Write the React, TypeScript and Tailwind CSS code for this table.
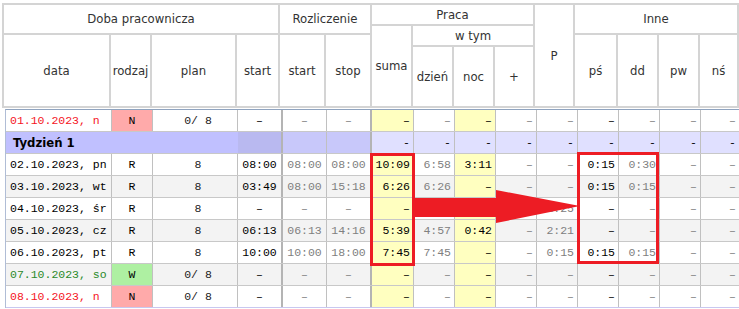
const D = "–";

type Row = {
  date: string;
  dateColor: string;
  kind: string;
  kindBg: string;
  plan: string;
  v: string[];
  alt?: boolean;
};

const rows: Row[] = [
  { date: "01.10.2023, n", dateColor: "text-[#f5141e]", kind: "N", kindBg: "bg-[#ffaaaa]", plan: "0/ 8", v: [D, D, D, D, D, D, D, D, D, D, D, D] },
  { date: "02.10.2023, pn", dateColor: "text-black", kind: "R", kindBg: "", plan: "8", v: ["08:00", "08:00", "08:00", "10:09", "6:58", "3:11", D, D, "0:15", "0:30", D, D] },
  { date: "03.10.2023, wt", dateColor: "text-black", kind: "R", kindBg: "", plan: "8", v: ["03:49", "08:00", "15:18", "6:26", "6:26", D, D, D, "0:15", "0:15", D, D], alt: true },
  { date: "04.10.2023, śr", dateColor: "text-black", kind: "R", kindBg: "", plan: "8", v: [D, D, D, D, D, D, D, "1:25", D, D, D, D] },
  { date: "05.10.2023, cz", dateColor: "text-black", kind: "R", kindBg: "", plan: "8", v: ["06:13", "06:13", "14:16", "5:39", "4:57", "0:42", D, "2:21", D, D, D, D], alt: true },
  { date: "06.10.2023, pt", dateColor: "text-black", kind: "R", kindBg: "", plan: "8", v: ["10:00", "10:00", "18:00", "7:45", "7:45", D, D, "0:15", "0:15", "0:15", D, D] },
  { date: "07.10.2023, so", dateColor: "text-[#2a8a2a]", kind: "W", kindBg: "bg-[#aef0a2]", plan: "0/ 8", v: [D, D, D, D, D, D, D, D, D, D, D, D], alt: true },
  { date: "08.10.2023, n", dateColor: "text-[#f5141e]", kind: "N", kindBg: "bg-[#ffaaaa]", plan: "0/ 8", v: [D, D, D, D, D, D, D, D, D, D, D, D] },
];

// start, start, stop, suma, dzień, noc, +, P, pś, dd, pw, nś
const valueCols = [
  "justify-center text-black border-r-2 border-[#b4b4b4]",
  "justify-center text-[#808080] border-r border-[#c0c0c0]",
  "justify-center text-[#808080] border-r-2 border-[#b4b4b4]",
  "justify-end pr-[3px] text-black border-r border-[#c0c0c0] bg-[#ffffc0]",
  "justify-end pr-[3px] text-[#808080] border-r border-[#c0c0c0]",
  "justify-end pr-[3px] text-black border-r border-[#c0c0c0] bg-[#ffffc0]",
  "justify-end pr-[3px] text-[#808080] border-r border-[#c0c0c0]",
  "justify-end pr-[3px] text-[#808080] border-r border-[#c0c0c0]",
  "justify-end pr-[3px] text-black border-r border-[#c0c0c0]",
  "justify-end pr-[3px] text-[#808080] border-r border-[#c0c0c0]",
  "justify-end pr-[3px] text-[#808080] border-r border-[#c0c0c0]",
  "justify-end pr-[3px] text-[#808080]",
];

const bodyGrid =
  "grid h-[22px] grid-cols-[106px_41px_85px_45px_44px_45px_42px_41px_41px_41px_41px_41px_41px_41px_38px] border-b";

function H({ className, children }: { className: string; children: React.ReactNode }) {
  return <div className={`flex items-center justify-center bg-white ${className}`}>{children}</div>;
}

function DayRow({ row, last }: { row: Row; last?: boolean }) {
  return (
    <div
      className={`${bodyGrid} ${last ? "border-[#c8c8f0]" : "border-[#c8c8c8]"} ${row.alt ? "bg-[#f3f3f3]" : "bg-white"}`}
    >
      <div className={`flex items-center border-r border-[#c0c0c0] pl-[4px] ${row.dateColor}`}>{row.date}</div>
      <div className={`flex items-center justify-center border-r border-[#c0c0c0] text-black ${row.kindBg}`}>
        {row.kind}
      </div>
      <div className="flex items-center justify-center border-r border-[#c0c0c0] pl-[6px] text-[#222]">{row.plan}</div>
      {row.v.map((val, i) => (
        <div key={i} className={`flex items-center ${valueCols[i]}`}>
          {val}
        </div>
      ))}
    </div>
  );
}

function WeekRow() {
  return (
    <div className={`${bodyGrid} border-[#c8c8c8] bg-[#e0e0ff]`}>
      <div className="col-span-3 flex items-center bg-[#c0c0ff] pl-[7px] font-['DejaVu_Sans_Condensed','Liberation_Sans',sans-serif] text-[13px] font-bold text-black">
        Tydzień 1
      </div>
      <div className="border-r-2 border-[#b4b4b4] bg-[#b9b9f0]" />
      <div className="border-r border-[#c0c0c0] bg-[#c8c8fa]" />
      <div className="border-r-2 border-[#b4b4b4] bg-[#c8c8fa]" />
      {Array.from({ length: 9 }).map((_, i) => (
        <div
          key={i}
          className={`flex items-center justify-end pr-[3px] text-black ${i < 8 ? "border-r border-[#c0c0c0]" : ""}`}
        >
          -
        </div>
      ))}
    </div>
  );
}

export default function App() {
  return (
    <div className="relative h-[309px] w-[739px] overflow-hidden bg-white pt-[3px]">
      <div className="ml-[2px] grid w-[737px] grid-cols-[105px_39px_83px_41px_44px_44px_39px_39px_39px_38px_38px_41px_39px_39px_37px] grid-rows-[19px_7px_10px_59px] gap-[2px] bg-[#d4d4d4] p-[2px] font-['DejaVu_Sans_Condensed','Liberation_Sans',sans-serif] text-[13px] text-[#333]">
        <H className="col-span-4 col-start-1 row-span-2 row-start-1">Doba pracownicza</H>
        <H className="col-span-2 col-start-5 row-span-2 row-start-1">Rozliczenie</H>
        <H className="col-span-4 col-start-7 row-start-1">Praca</H>
        <H className="col-start-11 row-span-4 row-start-1">P</H>
        <H className="col-span-4 col-start-12 row-span-2 row-start-1">Inne</H>
        <H className="col-start-1 row-span-2 row-start-3">data</H>
        <H className="col-start-2 row-span-2 row-start-3">rodzaj</H>
        <H className="col-start-3 row-span-2 row-start-3">plan</H>
        <H className="col-start-4 row-span-2 row-start-3">start</H>
        <H className="col-start-5 row-span-2 row-start-3">start</H>
        <H className="col-start-6 row-span-2 row-start-3">stop</H>
        <H className="col-start-7 row-span-3 row-start-2">suma</H>
        <H className="col-span-3 col-start-8 row-span-2 row-start-2">w tym</H>
        <H className="col-start-8 row-start-4">dzień</H>
        <H className="col-start-9 row-start-4">noc</H>
        <H className="col-start-10 row-start-4">+</H>
        <H className="col-start-12 row-span-2 row-start-3">pś</H>
        <H className="col-start-13 row-span-2 row-start-3">dd</H>
        <H className="col-start-14 row-span-2 row-start-3">pw</H>
        <H className="col-start-15 row-span-2 row-start-3">nś</H>
      </div>

      <div className="ml-[5px] mt-[1px] w-[734px] border-l border-t border-l-[#b0bdd6] border-t-[#8fa3bf] font-['Liberation_Mono',monospace] text-[11.5px]">
        <DayRow row={rows[0]} />
        <WeekRow />
        {rows.slice(1).map((r, i) => (
          <DayRow key={r.date} row={r} last={i === rows.length - 2} />
        ))}
      </div>

      {/* annotations drawn over the table */}
      <div className="absolute left-[370px] top-[153px] h-[113px] w-[45px] border-[3px] border-[#ed1c24]" />
      <div className="absolute left-[577px] top-[152px] h-[112px] w-[82px] border-[3px] border-[#ed1c24]" />
      <svg className="absolute left-0 top-0" width="739" height="309" viewBox="0 0 739 309">
        <polygon points="414,198 496,198 496,190 580,206 496,223 496,217 414,217" fill="#ed1c24" />
      </svg>
    </div>
  );
}
